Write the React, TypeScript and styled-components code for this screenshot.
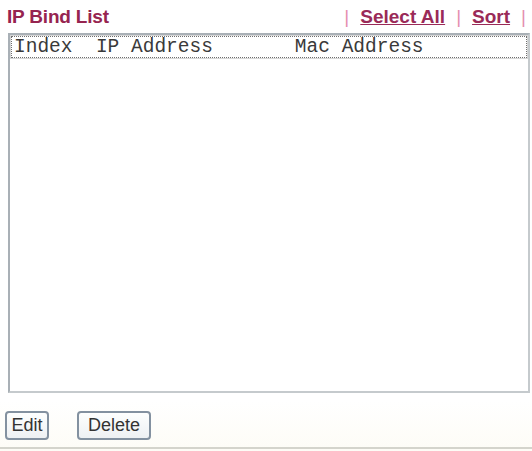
import React from "react";
import styled, { createGlobalStyle } from "styled-components";

const Global = createGlobalStyle`
  html, body { margin: 0; padding: 0; background: #ffffff; }
  body { font-family: "Liberation Sans", Arial, sans-serif; }
`;

const Page = styled.div`
  width: 532px;
  height: 451px;
  display: flex;
  flex-direction: column;
  box-sizing: border-box;
  background: linear-gradient(#ffffff 0, #ffffff 400px, #fdfcf6 451px);
`;

const Header = styled.div`
  height: 33px;
  box-sizing: border-box;
  padding: 6px 6px 0 7px;
  display: flex;
  justify-content: space-between;
  align-items: flex-start;
  font-size: 19px;
  font-weight: bold;
  line-height: 22px;
`;

const Title = styled.div`
  color: #962450;
  letter-spacing: -0.2px;
`;

const Links = styled.div`
  display: flex;
  align-items: flex-start;
  gap: 11px;
`;

const Sep = styled.span`
  color: #e58fb0;
  font-weight: normal;
`;

const Link = styled.a`
  color: #9a2a58;
  text-decoration: underline;
  cursor: pointer;
`;

const ListBox = styled.div`
  margin-left: 8px;
  width: 522px;
  height: 360px;
  box-sizing: border-box;
  border: 2px solid #a9b0b6;
  border-right-color: #c5cacd;
  border-bottom-color: #c5cacd;
  background: #ffffff;
  padding: 1px;
`;

const Row = styled.div`
  border: 1px dotted #6f6f6f;
  outline: 1px solid #d6d6d6;
  padding: 1px 2px 0;
  height: 19px;
  line-height: 19px;
  font-family: "Liberation Mono", "Courier New", monospace;
  font-size: 19.5px;
  color: #3a3a3a;
  white-space: pre;
  overflow: hidden;
  background: #ffffff;
`;

const ButtonRow = styled.div`
  display: flex;
  gap: 28px;
  padding: 18px 0 0 5px;
  height: 36px;
  border-bottom: 2px solid #d4d4cc;
`;

const Button = styled.button<{ $w: number }>`
  width: ${(p) => p.$w}px;
  height: 29px;
  padding: 0;
  border: 2px solid #8391a0;
  border-radius: 4px;
  background: linear-gradient(#fdfefe, #eef1f3);
  font-family: "Liberation Sans", Arial, sans-serif;
  font-size: 18px;
  color: #333333;
  line-height: 25px;
`;

export default function App() {
  return (
    <Page>
      <Global />
      <Header>
        <Title>IP Bind List</Title>
        <Links>
          <Sep>|</Sep>
          <Link>Select All</Link>
          <Sep>|</Sep>
          <Link>Sort</Link>
          <Sep>|</Sep>
        </Links>
      </Header>
      <ListBox>
        <Row>{"Index  IP Address       Mac Address"}</Row>
      </ListBox>
      <ButtonRow>
        <Button $w={44}>Edit</Button>
        <Button $w={74}>Delete</Button>
      </ButtonRow>
    </Page>
  );
}
